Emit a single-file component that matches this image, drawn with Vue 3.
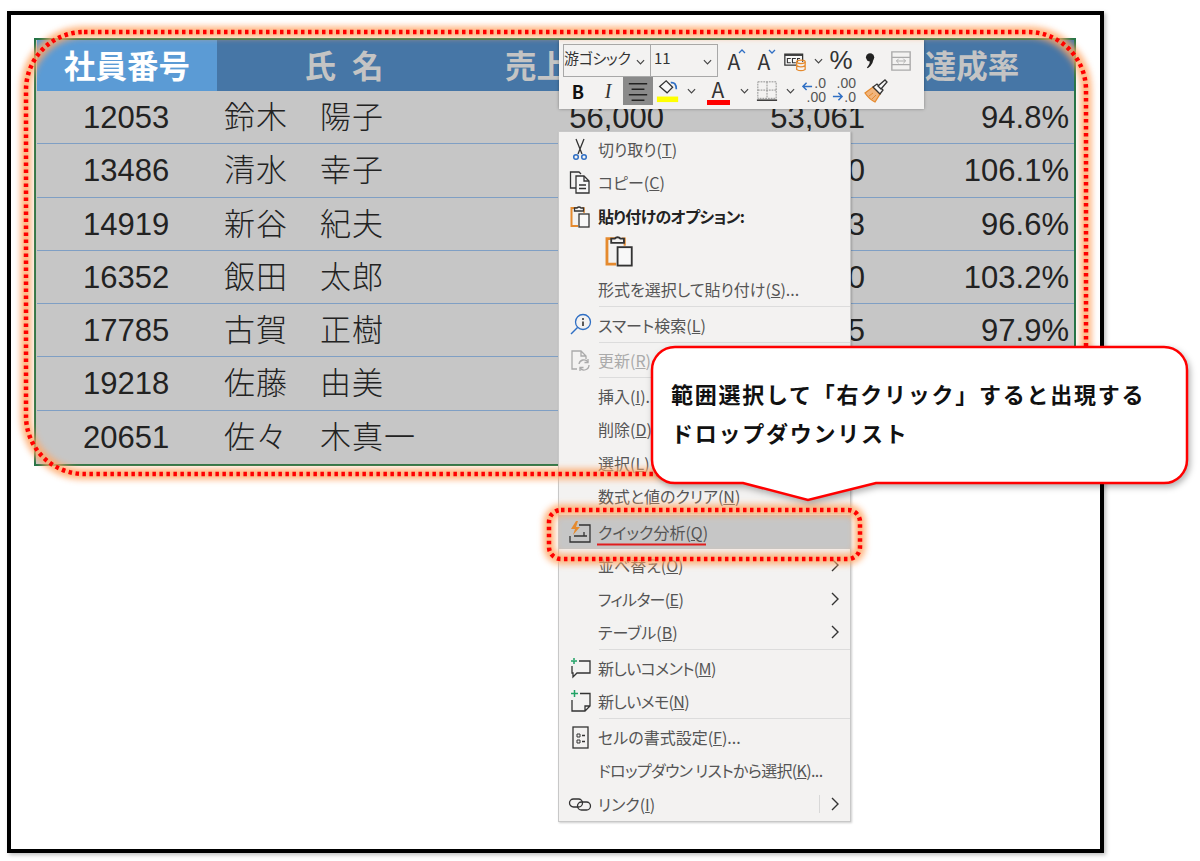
<script setup>
const rows = [
  { id: '12053', sei: '鈴木', mei: '陽子', plan: '56,000', actual: '53,061', rate: '94.8%' },
  { id: '13486', sei: '清水', mei: '幸子', plan: '', actual: '0', rate: '106.1%' },
  { id: '14919', sei: '新谷', mei: '紀夫', plan: '', actual: '3', rate: '96.6%' },
  { id: '16352', sei: '飯田', mei: '太郎', plan: '', actual: '0', rate: '103.2%' },
  { id: '17785', sei: '古賀', mei: '正樹', plan: '', actual: '5', rate: '97.9%' },
  { id: '19218', sei: '佐藤', mei: '由美', plan: '', actual: '', rate: '' },
  { id: '20651', sei: '佐々', mei: '木真一', plan: '', actual: '', rate: '' },
]

const dark = 'fill="none" stroke="#333" stroke-width="1.3"'
const icons = {
  cut: `<g ${dark}><path d="M8 2l6 15M16 2l-6 15"/></g><g fill="none" stroke="#2f6fc4" stroke-width="1.5"><circle cx="8" cy="20" r="2.3"/><circle cx="16" cy="20" r="2.3"/></g>`,
  copy: `<g ${dark}><path d="M8 18H2.5V2H11l2 2"/><path d="M8 6h8l5 5v12H8z" fill="#f8f8f8"/><path d="M16 6v5h5M11 15h7M11 18.500h7"/></g>`,
  paste: `<path d="M10 4H3.500v18H10" fill="none" stroke="#e58a2e" stroke-width="2"/><path d="M14 4h2v5" fill="none" stroke="#e58a2e" stroke-width="1.500"/><g ${dark}><path d="M6.500 7V4h2.500a2.500 2.500 0 0 1 4 0h2.500v3z" fill="#f3f2f1"/><rect x="11" y="10" width="10" height="13" fill="#f8f8f8"/></g>`,
  search: `<circle cx="15" cy="9" r="7.500" fill="none" stroke="#2f6fc4" stroke-width="1.300"/><path d="M9.500 14.500L3 21" stroke="#2f6fc4" stroke-width="1.500"/><path d="M15 8.500v4.500" stroke="#333" stroke-width="1.600"/><circle cx="15" cy="6" r="1" fill="#333"/>`,
  refresh: `<g fill="none" stroke="#aaa" stroke-width="1.300"><path d="M9 21H4V3h9l5 5v3M13 3v5h5"/><path d="M11 16a5 5 0 0 1 9-2M21 17a5 5 0 0 1-9 3"/><path d="M20 11v3.500h-3.500M12 23v-3.500h3.500"/></g>`,
  quick: `<path d="M8 1L3 9h4l-2 6 7-8H8l2-6z" fill="#e58a2e"/><g ${dark} stroke-width="1.500"><path d="M11 5h11v17H2v-6"/><path d="M6 16h10v-4M16 16h3"/></g>`,
  comment: `<path d="M6 4v-2M3 5h6M6 5v3" stroke="#21a366" stroke-width="1.500" fill="none"/><path d="M11 5h11v12H9l-4 4v-4H4v-7" fill="none" stroke="#333" stroke-width="1.300"/>`,
  note: `<path d="M3 4.500h7M6.500 1v7" stroke="#21a366" stroke-width="1.500" fill="none"/><path d="M12 4.500h10V17l-5 5H4V11M22 17h-5v5" fill="none" stroke="#333" stroke-width="1.300"/>`,
  format: `<g ${dark}><rect x="5" y="2" width="15" height="21"/><path d="M9 9h3v3H9zM9 15h3v3H9z" stroke-width="1"/><path d="M14 10.500h3M14 16.500h3"/></g>`,
  link: `<g ${dark} stroke-width="1.500"><rect x="1.500" y="7" width="13" height="8" rx="4"/><rect x="9.500" y="10" width="13" height="8" rx="4"/></g>`,
}

const menu = [
  { icon: 'cut', head: '切り取り(', key: 'T', tail: ')' },
  { icon: 'copy', head: 'コピー(', key: 'C', tail: ')' },
  { icon: 'paste', head: '貼り付けのオプション:', bold: true, tight: true },
  { pasteRow: true },
  { head: '形式を選択して貼り付け(', key: 'S', tail: ')...' },
  { sep: true },
  { icon: 'search', head: 'スマート検索(', key: 'L', tail: ')' },
  { sep: true },
  { icon: 'refresh', head: '更新(', key: 'R', tail: ')', off: true },
  { sep: true },
  { head: '挿入(', key: 'I', tail: ')...' },
  { head: '削除(', key: 'D', tail: ')...' },
  { head: '選択(', key: 'L', tail: ')' },
  { head: '数式と値のクリア(', key: 'N', tail: ')' },
  { sep: true },
  { icon: 'quick', head: 'クイック分析(', key: 'Q', tail: ')', hot: true },
  { head: '並べ替え(', key: 'O', tail: ')', arrow: true },
  { head: 'フィルター(', key: 'E', tail: ')', arrow: true, tight: true },
  { head: 'テーブル(', key: 'B', tail: ')', arrow: true },
  { sep: true },
  { icon: 'comment', head: '新しいコメント(', key: 'M', tail: ')', tight: true },
  { icon: 'note', head: '新しいメモ(', key: 'N', tail: ')', tight: true },
  { sep: true },
  { icon: 'format', head: 'セルの書式設定(', key: 'F', tail: ')...' },
  { head: 'ドロップダウン リストから選択(', key: 'K', tail: ')...', tight: true },
  { icon: 'link', head: 'リンク(', key: 'I', tail: ')', arrow: true, split: true },
]
</script>

<template>
  <div class="page">
    <div class="frame">
      <div class="sheet">
        <div class="row head">
          <div class="cell picked">社員番号</div>
          <div class="cell shi">氏 名</div>
          <div class="cell sales">売上目標</div>
          <div class="cell"></div>
          <div class="cell">達成率</div>
        </div>
        <div class="row body" v-for="r in rows" :key="r.id">
          <div class="cell id">{{ r.id }}</div>
          <div class="cell name"><span class="sei">{{ r.sei }}</span><span>{{ r.mei }}</span></div>
          <div class="cell num">{{ r.plan }}</div>
          <div class="cell num">{{ r.actual }}</div>
          <div class="cell num">{{ r.rate }}</div>
        </div>
      </div>
    </div>

    <!-- mini toolbar -->
    <div class="toolbar">
      <div class="tb-row">
        <div class="combo font">游ゴシック<svg class="caret" viewBox="0 0 10 6"><path d="M1 1l4 4 4-4" /></svg></div>
        <div class="combo size">11<svg class="caret" viewBox="0 0 10 6"><path d="M1 1l4 4 4-4" /></svg></div>
        <div class="btn grow">A<svg viewBox="0 0 8 5"><path d="M1 4l3-3 3 3" /></svg></div>
        <div class="btn grow">A<svg viewBox="0 0 8 5"><path d="M1 1l3 3 3-3" /></svg></div>
        <div class="btn wide">
          <svg class="ico" viewBox="0 0 26 24">
            <path d="M1 4h21v13H1z" fill="#f8f8f8" stroke="#333" stroke-width="1.500" />
            <path d="M1 4h21v2H1z" fill="#333" />
            <path d="M8 9H4v5h4M14 9h-4v5h4M19 9h-3v5h2" fill="none" stroke="#333" stroke-width="1.300" />
            <path d="M15 13h10v10H15z" fill="#f3f2f1" />
            <ellipse cx="20" cy="13" rx="5" ry="2" fill="none" stroke="#e58a2e" stroke-width="1.500" />
            <path d="M15 13v9q5 3 10 0v-9M15 17.500q5 3 10 0" fill="none" stroke="#e58a2e" stroke-width="1.500" />
          </svg>
        </div>
        <div class="chev"><svg viewBox="0 0 10 6"><path d="M1 1l4 4 4-4" /></svg></div>
        <div class="btn percent">%</div>
        <div class="btn">
          <svg class="ico" viewBox="0 0 24 24"><circle cx="11" cy="8" r="4.500" fill="#222" /><path d="M14.500 8q1 7-6 12l-1-1q4-4 3-8z" fill="#222" /></svg>
        </div>
        <div class="btn">
          <svg class="ico" viewBox="0 0 24 24" fill="none" stroke="#aaa" stroke-width="1.500">
            <path d="M2 2h20v20H2zM2 8h20M2 16h20" />
            <path d="M7 12h10M9.500 9.500L7 12l2.500 2.500M14.500 9.500L17 12l-2.500 2.500" stroke-width="1" />
          </svg>
        </div>
      </div>
      <div class="tb-row">
        <div class="btn bold">B</div>
        <div class="btn italic">I</div>
        <div class="btn on">
          <svg class="ico" viewBox="0 0 24 24" stroke="#222" stroke-width="1.600"><path d="M2 4h20M5 10h14M2 16h20M5 22h14" /></svg>
        </div>
        <div class="btn">
          <svg class="ico big" viewBox="0 0 24 26">
            <path d="M3 8l7-6 7 7-6 6z" fill="#f8f8f8" stroke="#333" stroke-width="1.400" />
            <path d="M15 4q6-1 6 7" fill="none" stroke="#2f6fc4" stroke-width="1.800" />
            <path d="M0 19h23v6H0z" fill="#ffff00" />
          </svg>
        </div>
        <div class="chev"><svg viewBox="0 0 10 6"><path d="M1 1l4 4 4-4" /></svg></div>
        <div class="btn font-color"><span>A</span><i></i></div>
        <div class="chev"><svg viewBox="0 0 10 6"><path d="M1 1l4 4 4-4" /></svg></div>
        <div class="btn">
          <svg class="ico" viewBox="0 0 24 24" fill="none" stroke="#888" stroke-width="1" stroke-dasharray="2 1">
            <path d="M2 2h20v18H2zM12 2v18M2 11h20" />
            <path d="M1 22h22" stroke="#222" stroke-width="1.500" stroke-dasharray="none" />
          </svg>
        </div>
        <div class="chev"><svg viewBox="0 0 10 6"><path d="M1 1l4 4 4-4" /></svg></div>
        <div class="btn dec">
          <svg class="ico" viewBox="0 0 24 24" fill="none" stroke="#2f6fc4" stroke-width="1.600"><path d="M11 7H1M5 3L1 7l4 4" /></svg>
          <span class="d1">.0</span><span class="d2">.00</span>
        </div>
        <div class="btn dec">
          <svg class="ico" viewBox="0 0 24 24" fill="none" stroke="#2f6fc4" stroke-width="1.600"><path d="M1 18h10M7 14l4 4-4 4" /></svg>
          <span class="d1">.00</span><span class="d2">.0</span>
        </div>
        <div class="btn brush">
          <svg class="ico big" viewBox="0 0 24 24">
            <path d="M1 14l8-6 7 7-5 8q-6-3-10-9z" fill="#f0b47c" stroke="#e58a2e" stroke-width="1.300" />
            <path d="M5 17l4-3M8 20l4-4" fill="none" stroke="#e58a2e" stroke-width="1" />
            <path d="M9 8l4-3 6 6-3 4z" fill="#f8f8f8" stroke="#333" stroke-width="1.300" />
            <path d="M14 7l7-6 2 2-6 7z" fill="#f8f8f8" stroke="#333" stroke-width="1.300" />
          </svg>
        </div>
      </div>
    </div>

    <!-- right click menu -->
    <div class="menu">
      <template v-for="(m, i) in menu" :key="i">
        <div v-if="m.sep" class="sep"></div>
        <div v-else-if="m.pasteRow" class="paste-row">
          <svg viewBox="0 0 24 24" v-html="icons.paste"></svg>
        </div>
        <div v-else class="item" :class="{ off: m.off, hot: m.hot, strong: m.bold }">
          <svg v-if="m.icon" class="m-ico" viewBox="0 0 24 24" v-html="icons[m.icon]"></svg>
          <span v-else class="m-ico"></span>
          <span class="label" :class="{ tight: m.tight }">{{ m.head }}<u v-if="m.key">{{ m.key }}</u>{{ m.tail }}</span>
          <span v-if="m.split" class="split"></span>
          <svg v-if="m.arrow" class="arrow" viewBox="0 0 8 14"><path d="M1 1l6 6-6 6" /></svg>
        </div>
      </template>
    </div>

    <!-- red dotted marks -->
    <svg class="marks" viewBox="0 0 1200 861">
      <defs>
        <filter id="glow" x="-10%" y="-30%" width="120%" height="160%"><feGaussianBlur stdDeviation="3" /></filter>
      </defs>
      <g fill="none">
        <rect class="halo" x="26" y="32" width="1060" height="442" rx="58" filter="url(#glow)" />
        <rect class="dots" x="26" y="32" width="1060" height="442" rx="58" />
        <rect class="halo" x="549" y="510" width="311" height="49" rx="12" filter="url(#glow)" />
        <rect class="dots" x="549" y="510" width="311" height="49" rx="12" />
        <path d="M597 544.500h109" stroke="#e01e1e" stroke-width="2" />
      </g>
    </svg>

    <!-- callout -->
    <div class="callout">
      <svg class="bubble" viewBox="640 340 560 170">
        <path d="M675 347H1164a23 23 0 0 1 23 23V460a23 23 0 0 1-23 23H876L808 500 743 483H675a23 23 0 0 1-23-23V370a23 23 0 0 1 23-23z" />
      </svg>
      <p>範囲選択して「右クリック」すると出現する</p>
      <p>ドロップダウンリスト</p>
    </div>
  </div>
</template>

<style scoped>
.page {
  position: relative;
  width: 1200px;
  height: 861px;
  overflow: hidden;
  padding: 11px 96px 8px 7px;
  box-sizing: border-box;
  background: #fff;
  font-family: "Noto Sans CJK JP", "Noto Sans", sans-serif;
}
.frame {
  height: 100%;
  box-sizing: border-box;
  border: 4px solid #000;
  padding: 23px 24px 0 23px;
  box-shadow: 2px 2px 4px rgba(0, 0, 0, 0.25);
}
.sheet {
  border: 2px solid #217346;
  padding-left: 1px;
  background: #c6c6c6;
}
.row {
  display: grid;
  grid-template-columns: 180px 254px 198px 201px 204px;
}
.head {
  height: 51px;
  background: #4676a6;
  color: #c4c4c4;
  font-size: 31.500px;
  font-weight: 700;
  line-height: 49px;
  text-align: center;
}
.picked {
  background: #5b9bd5;
  color: #fff;
}
.shi {
  word-spacing: 9px;
}
.sales {
  padding-right: 4px;
}
.body {
  height: 53.300px;
  box-sizing: border-box;
  border-bottom: 1px solid #7f9fc4;
  color: #222;
  font-size: 31px;
  font-weight: 300;
  line-height: 47px;
  white-space: nowrap;
}
.body:last-child {
  border-bottom: 0;
}
.id {
  padding-left: 46px;
  font-family: "Liberation Sans", sans-serif;
  line-height: 53px;
}
.name {
  padding-left: 7px;
  letter-spacing: 1px;
}
.sei {
  margin-right: 32px;
}
.num {
  padding-right: 5px;
  font-family: "Liberation Sans", sans-serif;
  line-height: 53px;
  text-align: right;
}

.toolbar {
  position: absolute;
  left: 559px;
  top: 40px;
  width: 365px;
  height: 69px;
  box-sizing: border-box;
  padding: 4px;
  z-index: 2;
  background: #f3f2f1;
  box-shadow: 0 0 3px rgba(0, 0, 0, 0.35);
  color: #333;
}
.tb-row {
  display: flex;
  align-items: center;
}
.tb-row + .tb-row {
  height: 28px;
}
.combo {
  position: relative;
  box-sizing: border-box;
  height: 33px;
  border: 1px solid #a8a8a8;
  font-size: 15px;
  line-height: 26px;
  white-space: nowrap;
}
.font {
  width: 88px;
  font-feature-settings: "palt";
  letter-spacing: -0.300px;
}
.size {
  width: 68px;
  margin-left: -1px;
  padding-left: 3px;
  margin-right: 1px;
}
.caret {
  position: absolute;
  right: 5px;
  top: 14px;
  width: 9px;
  height: 6px;
  fill: none;
  stroke: #444;
  stroke-width: 1.300;
}
.btn {
  position: relative;
  display: flex;
  flex: none;
  align-items: center;
  justify-content: center;
  width: 30px;
  height: 28px;
}
.wide {
  width: 31px;
}
.ico {
  width: 22px;
  height: 22px;
}
.ico.big {
  width: 24px;
  height: 24px;
}
.chev {
  display: flex;
  flex: none;
  justify-content: center;
  width: 16px;
}
.chev svg {
  width: 9px;
  height: 6px;
  fill: none;
  stroke: #444;
  stroke-width: 1.300;
}
.grow {
  font-size: 21px;
}
.grow svg {
  position: absolute;
  right: 3px;
  top: 2px;
  width: 8px;
  height: 5px;
  fill: none;
  stroke: #2f6fc4;
  stroke-width: 1.300;
}
.percent {
  font-family: "Liberation Sans", sans-serif;
  font-size: 26px;
}
.bold {
  font-size: 18px;
  font-weight: 700;
  color: #111;
}
.italic {
  font-family: "Liberation Serif", serif;
  font-size: 20px;
  font-style: italic;
}
.on {
  background: #8a8a8a;
}
.font-color {
  margin-left: 1px;
  width: 36px;
  flex-direction: column;
  font-size: 21px;
  line-height: 22px;
}
.font-color i {
  width: 23px;
  height: 5px;
  background: #f00;
}
.dec {
  font-family: "Liberation Sans", sans-serif;
  font-size: 14px;
  line-height: 13px;
  color: #555;
}
.dec .ico {
  position: absolute;
  left: 4px;
  top: 3px;
}
.dec span {
  position: absolute;
  right: 2px;
}
.d1 {
  top: 0;
}
.d2 {
  top: 14px;
}
.brush {
  margin-left: 3px;
}

.menu {
  position: absolute;
  left: 558px;
  top: 131px;
  width: 293px;
  box-sizing: border-box;
  border: 1px solid #c8c8c8;
  z-index: 2;
  background: #f3f2f1;
  box-shadow: 1px 1px 2px rgba(0, 0, 0, 0.2);
  color: #555;
  font-size: 16px;
}
.item {
  display: flex;
  align-items: center;
  height: 33.500px;
  padding-left: 9px;
  white-space: nowrap;
}
.m-ico {
  flex: none;
  width: 24px;
  height: 24px;
  margin-right: 6px;
}
.label {
  font-feature-settings: "palt";
}
.tight {
  letter-spacing: -0.650px;
}
.strong {
  color: #222;
  font-weight: 700;
}
.off {
  color: #aaa;
}
.hot {
  background: #c6c6c6;
}
.arrow {
  margin-left: auto;
  margin-right: 11px;
  width: 8px;
  height: 14px;
  fill: none;
  stroke: #333;
  stroke-width: 1.400;
}
.split {
  margin-left: auto;
  height: 18px;
  border-left: 1px solid #d8d8d8;
}
.split + .arrow {
  margin-left: 11px;
}
.sep {
  height: 1px;
  margin: 0 0 1px 40px;
  background: #dcdcdc;
}
.paste-row {
  height: 40px;
  padding-left: 43px;
}
.paste-row svg {
  width: 34px;
  height: 34px;
}

.marks {
  position: absolute;
  inset: 0;
  z-index: 3;
  pointer-events: none;
}
.halo {
  stroke: #ffa868;
  stroke-width: 11;
  opacity: 0.85;
}
.dots {
  stroke: #f00;
  stroke-width: 4.500;
  stroke-dasharray: 3.500 3.500;
}

.callout {
  position: absolute;
  left: 651px;
  top: 346px;
  width: 537px;
  height: 138px;
  box-sizing: border-box;
  padding-top: 28px;
  padding-left: 20px;
  z-index: 4;
  color: #111;
  font-size: 22px;
  font-weight: 700;
  letter-spacing: 1.750px;
  line-height: 39px;
}
.callout p {
  position: relative;
  margin: 0;
  white-space: nowrap;
}
.bubble {
  position: absolute;
  left: -11px;
  top: -6px;
  width: 560px;
  height: 170px;
  filter: drop-shadow(2px 3px 3px rgba(0, 0, 0, 0.3));
}
.bubble path {
  fill: #fff;
  stroke: #f00;
  stroke-width: 2.500;
}
</style>
